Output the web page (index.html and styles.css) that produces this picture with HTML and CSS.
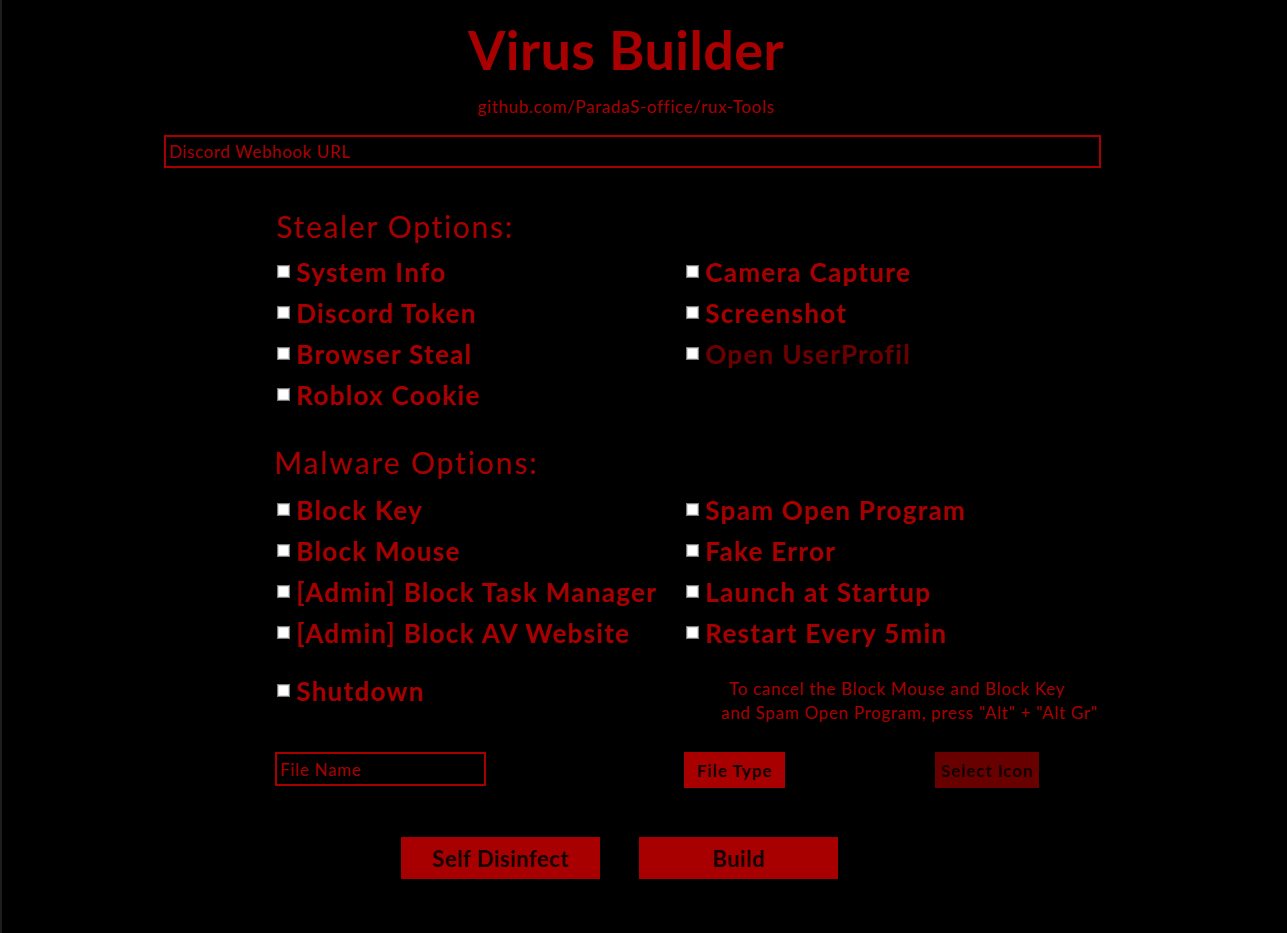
FILE: index.html
```html
<!DOCTYPE html>
<html lang="en">
<head>
<meta charset="utf-8">
<title>Virus Builder</title>
<link rel="stylesheet" href="styles.css">
</head>
<body>
<div class="app">
  <header class="header">
    <h1 class="title">Virus Builder</h1>
    <div class="subtitle">github.com/ParadaS-office/rux-Tools</div>
  </header>

  <input class="webhook" type="text" placeholder="Discord Webhook URL">

  <section class="section">
    <h2 class="section-title stealer">Stealer Options:</h2>
    <div class="grid stealer-grid">
      <label class="opt"><span class="cb"></span><span>System Info</span></label>
      <label class="opt"><span class="cb"></span><span>Camera Capture</span></label>
      <label class="opt"><span class="cb"></span><span>Discord Token</span></label>
      <label class="opt"><span class="cb"></span><span>Screenshot</span></label>
      <label class="opt"><span class="cb"></span><span>Browser Steal</span></label>
      <label class="opt dim"><span class="cb"></span><span>Open UserProfil</span></label>
      <label class="opt"><span class="cb"></span><span>Roblox Cookie</span></label>
    </div>

    <h2 class="section-title malware">Malware Options:</h2>
    <div class="grid malware-grid">
      <label class="opt"><span class="cb"></span><span>Block Key</span></label>
      <label class="opt"><span class="cb"></span><span>Spam Open Program</span></label>
      <label class="opt"><span class="cb"></span><span>Block Mouse</span></label>
      <label class="opt"><span class="cb"></span><span>Fake Error</span></label>
      <label class="opt"><span class="cb"></span><span>[Admin] Block Task Manager</span></label>
      <label class="opt"><span class="cb"></span><span>Launch at Startup</span></label>
      <label class="opt"><span class="cb"></span><span>[Admin] Block AV Website</span></label>
      <label class="opt"><span class="cb"></span><span>Restart Every 5min</span></label>
    </div>

    <div class="grid extra-row">
      <label class="opt"><span class="cb"></span><span>Shutdown</span></label>
      <div class="note">
        <div class="note-line first">To cancel the Block Mouse and Block Key</div>
        <div class="note-line">and Spam Open Program, press "Alt" + "Alt Gr"</div>
      </div>
    </div>
  </section>

  <div class="tools">
    <input class="filename" type="text" placeholder="File Name">
    <button class="btn small filetype">File Type</button>
    <button class="btn small selecticon">Select Icon</button>
  </div>

  <div class="actions">
    <button class="btn big">Self Disinfect</button>
    <button class="btn big">Build</button>
  </div>
</div>
</body>
</html>
```

FILE: styles.css
```css
* { box-sizing: border-box; }

html, body {
  margin: 0;
  padding: 0;
  background: #000;
}

body {
  font-family: Lato, "Open Sans", "DejaVu Sans", sans-serif;
  color: #a80000;
  box-shadow: inset 2px 0 0 #1e1e1e;
  min-height: 933px;
}

.app {
  width: 1287px;
  min-height: 933px;
  padding-top: 18px;
}

.header {
  width: 1252px;
  text-align: center;
}

.title {
  margin: 0;
  font-size: 54px;
  letter-spacing: 0.4px;
  line-height: 64px;
  font-weight: 700;
  color: #a80000;
}

.subtitle {
  margin-top: 15px;
  font-size: 17px;
  letter-spacing: 0.65px;
  line-height: 20px;
  color: #a80000;
}

input {
  font-family: inherit;
  background: #000;
  outline: none;
}

.webhook {
  display: block;
  margin: 18px 0 0 164px;
  width: 937px;
  height: 33px;
  border: 2px solid #a80000;
  padding: 0 3px;
  font-size: 17px;
  letter-spacing: 0.6px;
  color: #a80000;
}

.webhook::placeholder,
.filename::placeholder {
  color: #a80000;
  opacity: 1;
}

.section {
  padding-left: 277px;
}

.section-title {
  margin: 0;
  font-size: 30px;
  line-height: 36px;
  font-weight: 400;
  color: #a80000;
}

.stealer {
  margin-top: 40px;
  margin-left: -1px;
  letter-spacing: 1.7px;
}

.malware {
  margin-top: 28px;
  margin-left: -3px;
  letter-spacing: 1.9px;
}

.grid {
  display: grid;
  grid-template-columns: 409px 1fr;
  grid-auto-rows: 41px;
}

.stealer-grid { margin-top: 8px; }
.malware-grid { margin-top: 10px; }
.extra-row { margin-top: 17px; }

.opt {
  display: flex;
  align-items: center;
  gap: 6px;
  font-size: 26px;
  letter-spacing: 1.3px;
  line-height: 41px;
  font-weight: 700;
  color: #a80000;
  white-space: nowrap;
}

.opt.dim { color: #6a0000; }

.cb {
  flex: none;
  width: 13px;
  height: 13px;
  background: #fff;
  border: 1px solid #7a7a7a;
  box-shadow: inset 0 0 0 1px #d8d8d8;
  margin-top: -2px;
}

.note {
  padding-left: 35px;
  padding-top: 6px;
  font-size: 17px;
  letter-spacing: 0.7px;
  line-height: 23.5px;
  color: #a80000;
  white-space: nowrap;
}

.note-line.first { padding-left: 8px; }

.tools {
  display: flex;
  align-items: flex-start;
  margin-top: 40px;
  padding-left: 275px;
}

.filename {
  width: 211px;
  height: 34px;
  border: 2px solid #a80000;
  padding: 0 3px;
  font-size: 17px;
  letter-spacing: 0.7px;
  color: #a80000;
}

.btn {
  font-family: inherit;
  font-weight: 700;
  border: none;
  padding: 0;
  color: #120000;
  background: #a80000;
  cursor: pointer;
}

.btn.small {
  height: 36px;
  font-size: 17px;
  letter-spacing: 0.9px;
}

.filetype {
  width: 101px;
  margin-left: 198px;
}

.selecticon {
  width: 104px;
  margin-left: 150px;
  background: #680000;
}

.actions {
  display: flex;
  gap: 39px;
  margin-top: 49px;
  padding-left: 401px;
}

.btn.big {
  width: 199px;
  height: 42px;
  font-size: 22px;
  letter-spacing: 0.5px;
}
```
